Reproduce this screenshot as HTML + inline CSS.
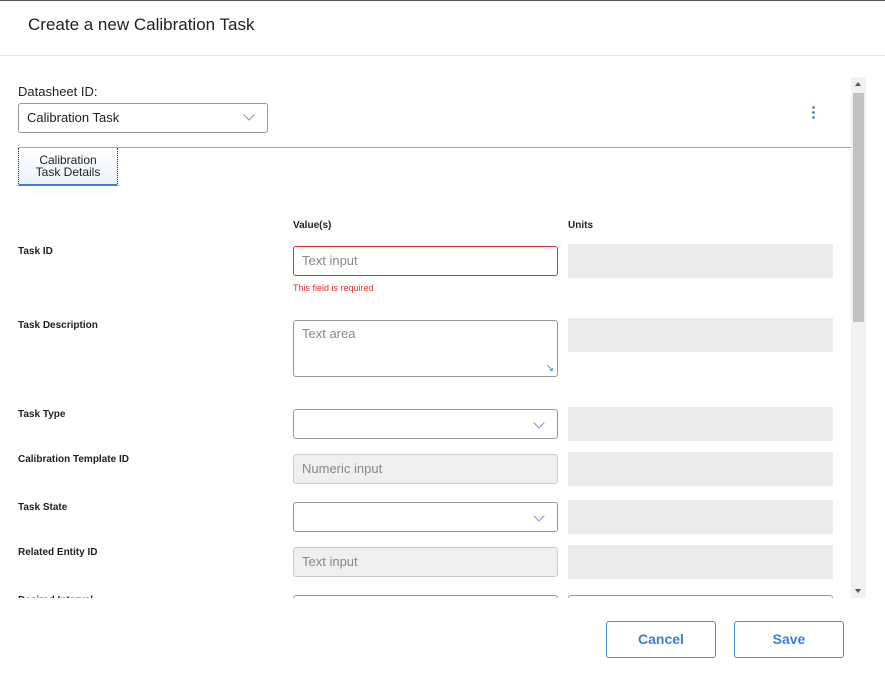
<!DOCTYPE html><html><head><style>
*{box-sizing:border-box}body{margin:0;width:885px;height:678px;background:#fff;font-family:"Liberation Sans",sans-serif;position:relative;overflow:hidden;color:#222}
.a{position:absolute}
.lbl{font-size:10px;font-weight:bold;color:#222}
.unit{background:#ececec;height:34px;width:265px;left:568px}
.inp{left:293px;width:265px;height:30px;border:1px solid #999;border-radius:3px;font-size:13px;color:#888;padding:6px 8px;background:#fff}
.dis{background:#efefef;border-color:#ccc}
.chev{position:absolute;right:14px;top:9px;width:8px;height:8px;border-right:1px solid #7a8fe0;border-bottom:1px solid #7a8fe0;transform:rotate(45deg)}
.btn{width:110px;height:37px;top:621px;border:1px solid #4a8ae0;border-radius:3px;color:#3d7ddc;font-weight:bold;font-size:14px;text-align:center;line-height:35px}
</style></head><body>
<div class="a" style="top:0;left:0;width:885px;height:1px;background:#555"></div>
<div class="a" style="left:28px;top:15px;font-size:17px;color:#222">Create a new Calibration Task</div>
<div class="a" style="top:55px;left:0;width:885px;height:1px;background:#e6e6e6"></div>
<div class="a" style="left:0;top:60px;width:885px;height:538px;overflow:hidden">
<div class="a" style="left:18px;top:24px;font-size:13px">Datasheet ID:</div>
<div class="a inp" style="left:18px;top:43px;width:250px;color:#222;border-color:#999">Calibration Task<span class="chev" style="top:7px"></span></div>
<div class="a" style="left:812px;top:45px;width:3px;height:14px;background:radial-gradient(circle,#3d7ddc 1.2px,transparent 1.5px) 0 0/3px 5px"></div>
<div class="a" style="left:18px;top:87px;width:833px;height:1px;background:#aaa"></div>
<div class="a" style="left:18px;top:88px;width:100px;height:38px;border:1px dotted #333;border-top:none;border-bottom:2px solid #3d7ddc;background:linear-gradient(#fff,#eaf2fd);font-size:12px;text-align:center;line-height:12px;padding-top:6px">Calibration<br>Task Details</div>
<div class="a lbl" style="left:293px;top:160px">Value(s)</div>
<div class="a lbl" style="left:568px;top:160px">Units</div>
<div class="a lbl" style="left:18px;top:186px">Task ID</div>
<div class="a inp" style="top:186px;border-color:#e03030">Text input</div>
<div class="a unit" style="top:184px"></div>
<div class="a" style="left:293px;top:223px;font-size:9px;color:#e03030">This field is required</div>
<div class="a lbl" style="left:18px;top:260px">Task Description</div>
<div class="a inp" style="top:260px;height:57px;padding-top:5px">Text area<span class="a" style="right:3px;bottom:2px;font-size:10px;color:#3d7ddc">&#8600;</span></div>
<div class="a unit" style="top:258px"></div>
<div class="a lbl" style="left:18px;top:349px">Task Type</div>
<div class="a inp" style="top:349px"><span class="chev"></span></div>
<div class="a unit" style="top:347px"></div>
<div class="a lbl" style="left:18px;top:394px">Calibration Template ID</div>
<div class="a inp dis" style="top:394px">Numeric input</div>
<div class="a unit" style="top:392px"></div>
<div class="a lbl" style="left:18px;top:442px">Task State</div>
<div class="a inp" style="top:442px"><span class="chev"></span></div>
<div class="a unit" style="top:440px"></div>
<div class="a lbl" style="left:18px;top:487px">Related Entity ID</div>
<div class="a inp dis" style="top:487px">Text input</div>
<div class="a unit" style="top:485px"></div>
<div class="a lbl" style="left:18px;top:535px">Desired Interval</div>
<div class="a inp" style="top:535px"></div>
<div class="a inp" style="left:568px;top:535px"></div>
<div class="a" style="left:851px;top:17px;width:15px;height:521px;background:#f1f1f1"></div>
<div class="a" style="left:853px;top:33px;width:11px;height:229px;background:#c1c1c1"></div>
<div class="a" style="left:855px;top:22px;border:3.5px solid transparent;border-bottom:4px solid #555;border-top:none"></div>
<div class="a" style="left:855px;top:529px;border:3.5px solid transparent;border-top:4px solid #555;border-bottom:none"></div>
</div>
<div class="a btn" style="left:606px">Cancel</div>
<div class="a btn" style="left:734px">Save</div>
</body></html>
